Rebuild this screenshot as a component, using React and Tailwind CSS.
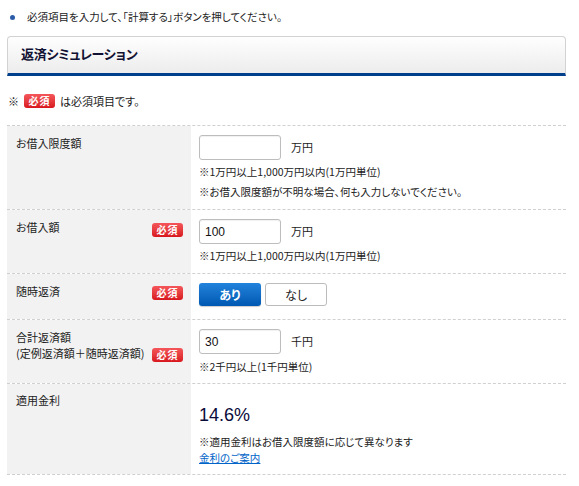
import React from "react";

const font = "[font-family:'Noto_Sans_CJK_JP','Noto_Sans',sans-serif]";

function Badge() {
  return (
    <span className="inline-flex items-center justify-center w-[31px] h-[14px] rounded-[3px] bg-gradient-to-b from-[#f4555a] to-[#d8141c] text-white text-[10px] font-bold leading-none tracking-[1px]">
      必須
    </span>
  );
}

function Input({ value }) {
  return (
    <div className="w-[82px] h-[25px] rounded-[3px] border border-[#bdbdbd] flex items-center pl-[5px] text-[12px] text-[#111] [font-family:'Liberation_Sans',sans-serif] shadow-[inset_0_1px_1px_rgba(0,0,0,0.06)]">
      {value}
    </div>
  );
}

export default function App() {
  return (
    <div className={`w-[579px] h-[486px] bg-white text-[11px] text-[#222] ${font} [font-feature-settings:'palt'] overflow-hidden`}>
      <div className="h-[24px] pt-[10px] pl-[10px] flex items-center gap-[12px] leading-none">
        <span className="w-[5px] h-[5px] rounded-full bg-[#2c5ca8] shrink-0" />
        <span className="text-[10.5px]">必須項目を入力して、「計算する」ボタンを押してください。</span>
      </div>

      <div className="mt-[12px] ml-[7px] w-[559px] h-[40px] border-t border-x border-[#d2d2d2] rounded-t-[4px] border-b-[3px] border-b-[#003f8c] bg-gradient-to-b from-[#fefefe] to-[#ececec] pl-[13px] flex items-center pb-[3px]">
        <span className="text-[13px] font-bold text-[#111133] tracking-[-0.3px]">返済シミュレーション</span>
      </div>

      <div className="mt-[18px] ml-[8px] h-[14px] flex items-center gap-[5px] leading-none">
        <span>※</span>
        <Badge />
        <span>は必須項目です。</span>
      </div>

      <div className="mt-[17px] ml-[7px] w-[559px] border-t border-dashed border-[#d0d0d0]">
        {/* Row 1 */}
        <div className="flex h-[84px] border-b border-dashed border-[#d0d0d0]">
          <div className="w-[184px] bg-[#f2f2f2] pl-[9px] pr-[8px] pt-[7px] flex justify-between">
            <span className="leading-[20px]">お借入限度額</span>
          </div>
          <div className="flex-1 pl-[8px] pt-[9px] text-[10.5px]">
            <div className="flex items-center gap-[10px]">
              <Input value="" />
              <span className="text-[11px]">万円</span>
            </div>
            <div className="leading-[20px] mt-[2px]">※1万円以上1,000万円以内(1万円単位)</div>
            <div className="leading-[20px]">※お借入限度額が不明な場合、何も入力しないでください。</div>
          </div>
        </div>
        {/* Row 2 */}
        <div className="flex h-[64px] border-b border-dashed border-[#d0d0d0]">
          <div className="w-[184px] bg-[#f2f2f2] pl-[9px] pr-[8px] pt-[7px] flex justify-between items-start">
            <span className="leading-[20px]">お借入額</span>
            <span className="mt-[4px]"><Badge /></span>
          </div>
          <div className="flex-1 pl-[8px] pt-[9px] text-[10.5px]">
            <div className="flex items-center gap-[10px]">
              <Input value="100" />
              <span className="text-[11px]">万円</span>
            </div>
            <div className="leading-[20px] mt-[2px]">※1万円以上1,000万円以内(1万円単位)</div>
          </div>
        </div>
        {/* Row 3 */}
        <div className="flex h-[46px] border-b border-dashed border-[#d0d0d0]">
          <div className="w-[184px] bg-[#f2f2f2] pl-[9px] pr-[8px] pt-[7px] flex justify-between items-start">
            <span className="leading-[20px]">随時返済</span>
            <span className="mt-[3px]"><Badge /></span>
          </div>
          <div className="flex-1 pl-[8px] pt-[9px] flex gap-[4px]">
            <div className="w-[62px] h-[23px] rounded-[3px] bg-gradient-to-b from-[#2283dc] to-[#0058b2] text-white font-bold text-[12px] flex items-center justify-center shadow-[0_1px_1px_rgba(0,0,0,0.2)]">
              あり
            </div>
            <div className="w-[62px] h-[23px] rounded-[3px] border border-[#bcbcbc] bg-white text-[12px] text-[#222] flex items-center justify-center">
              なし
            </div>
          </div>
        </div>
        {/* Row 4 */}
        <div className="flex h-[64px] border-b border-dashed border-[#d0d0d0]">
          <div className="w-[184px] bg-[#f2f2f2] pl-[9px] pr-[8px] pt-[9px] flex justify-between items-start">
            <div className="leading-[16px]">
              <div>合計返済額</div>
              <div>(定例返済額＋随時返済額)</div>
            </div>
            <span className="mt-[17px]"><Badge /></span>
          </div>
          <div className="flex-1 pl-[8px] pt-[9px] text-[10.5px]">
            <div className="flex items-center gap-[10px]">
              <Input value="30" />
              <span className="text-[11px]">千円</span>
            </div>
            <div className="leading-[20px] mt-[3px]">※2千円以上(1千円単位)</div>
          </div>
        </div>
        {/* Row 5 */}
        <div className="flex h-[91px] border-b border-dashed border-[#d0d0d0]">
          <div className="w-[184px] bg-[#f2f2f2] pl-[9px] pr-[8px] pt-[6px]">
            <span className="leading-[20px]">適用金利</span>
          </div>
          <div className="flex-1 pl-[8px] pt-[19px] text-[10.5px]">
            <div className="text-[18px] leading-[24px] text-[#0a0a3a] [font-family:'Liberation_Sans',sans-serif]">14.6%</div>
            <div className="leading-[16px] mt-[7px]">※適用金利はお借入限度額に応じて異なります</div>
            <a href="#" className="block leading-[16px] text-[#0064c8] underline">金利のご案内</a>
          </div>
        </div>
      </div>
    </div>
  );
}
